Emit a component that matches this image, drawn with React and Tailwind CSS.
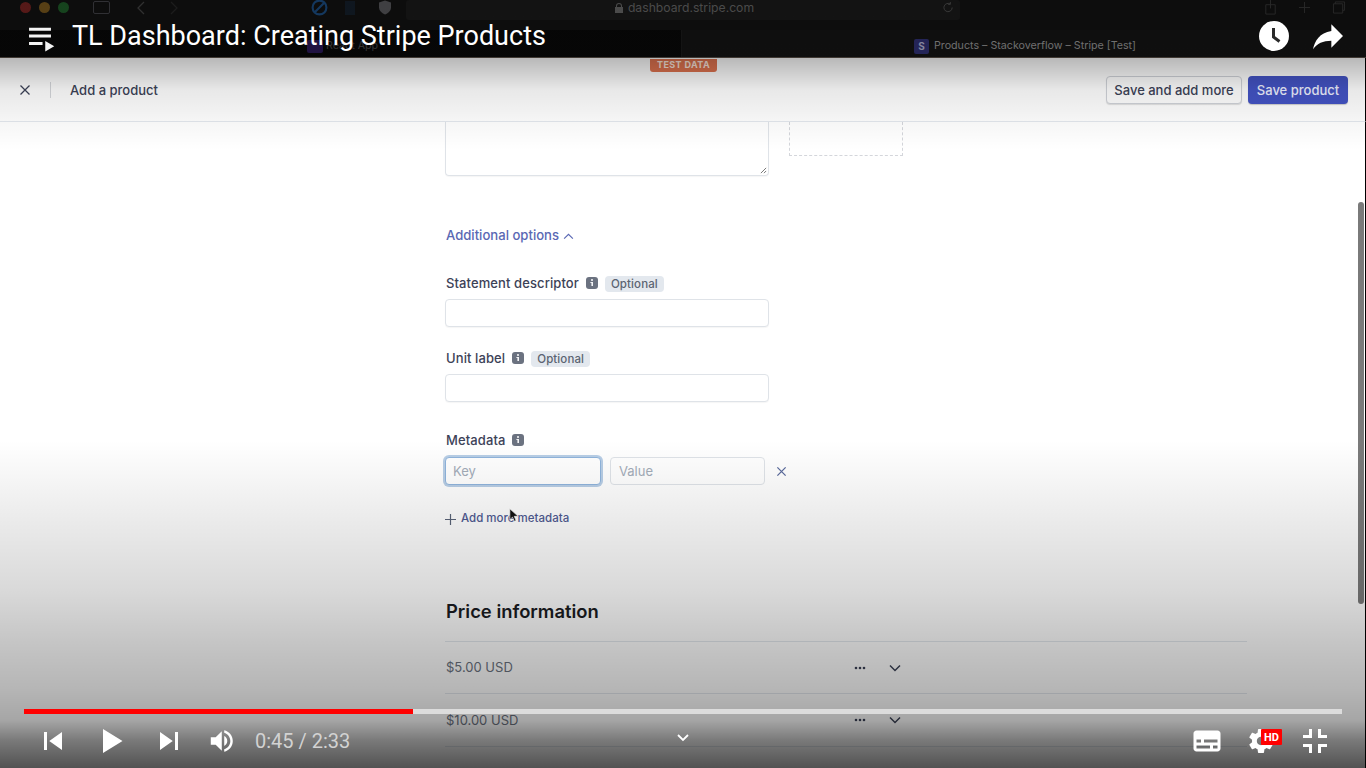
import React from "react";

const Ic = ({ d, className = "", view = "0 0 36 36", fill = "#fff" }) => (
  <svg viewBox={view} className={className} fill={fill}>
    <path d={d} />
  </svg>
);

const Info = () => (
  <span className="flex h-[12px] w-[12px] items-center justify-center rounded-[3px] bg-[#6b7280]">
    <svg viewBox="0 0 12 12" className="h-[12px] w-[12px]" fill="#f3f4f6">
      <rect x="5" y="2.2" width="2" height="1.6" />
      <path d="M4.4 5h2.6v4H5.4V6H4.4z" />
    </svg>
  </span>
);

const Optional = () => (
  <span className="rounded-[4px] bg-[#e3e8ee] px-[6px] py-[1px] text-[11.5px] leading-[15px] font-medium text-[#5b6472]">
    Optional
  </span>
);

const Label = ({ children, optional }) => (
  <div className="flex h-[18px] items-center pl-px text-[13px] font-medium tracking-[0.1px] text-[#3c4257]">
    <span className="mr-[7px] pt-[2px]">{children}</span>
    <Info />
    {optional && <span className="ml-[7px] pt-px"><Optional /></span>}
  </div>
);

const TextBox = () => (
  <div className="h-[28px] w-[324px] rounded-[4px] border border-[#dfe3e8] bg-white shadow-[0_1px_1px_rgba(0,0,0,0.04)]" />
);

const PriceRow = ({ price, tall }) => (
  <div className={`flex items-center border-b border-[#e3e8ee] pr-[346px] text-[13px] text-[#6b7280] ${tall ? "h-[53px]" : "h-[52px]"}`}>
    <span className="flex-1 pl-px pt-px">{price}</span>
    <svg viewBox="0 0 12 4" className="mr-[23px] h-[4px] w-[12px]" fill="#3c4257">
      <circle cx="2" cy="2" r="1.3" /><circle cx="6" cy="2" r="1.3" /><circle cx="10" cy="2" r="1.3" />
    </svg>
    <svg viewBox="0 0 12 8" className="h-[8px] w-[12px]" fill="none" stroke="#3c4257" strokeWidth="1.5">
      <path d="M1 1.500l5 5 5-5" />
    </svg>
  </div>
);

export default function App() {
  return (
    <div className="relative flex h-screen w-full flex-col overflow-hidden bg-white font-['Inter','Liberation_Sans',sans-serif]">
      {/* browser chrome */}
      <div className="flex h-[58px] shrink-0 flex-col border-b border-[#5a5048] bg-[#121212]">
        <div className="relative flex h-[30px] items-center pb-[15px] pl-[20px]">
          <span className="h-[11px] w-[11px] rounded-full bg-[#7a2422]" />
          <span className="ml-[8px] h-[11px] w-[11px] rounded-full bg-[#7c5a1e]" />
          <span className="ml-[8px] h-[11px] w-[11px] rounded-full bg-[#1f5f2a]" />
          <span className="ml-[24px] h-[13px] w-[17px] rounded-[2px] border border-[#44444a]" />
          <svg viewBox="0 0 8 14" className="ml-[27px] h-[14px] w-[8px]" fill="none" stroke="#444" strokeWidth="1.3"><path d="M7 1L1 7l6 6" /></svg>
          <svg viewBox="0 0 8 14" className="ml-[25px] h-[14px] w-[8px]" fill="none" stroke="#282828" strokeWidth="1.3"><path d="M1 1l6 6-6 6" /></svg>
          <svg viewBox="0 0 16 16" className="ml-[133px] h-[17px] w-[17px]" fill="none" stroke="#1c4f86" strokeWidth="2"><circle cx="8" cy="8" r="6.5" /><path d="M3.5 12.5l9-9" /></svg>
          <span className="ml-[17px] h-[14px] w-[10px] bg-[#15202c]" />
          <svg viewBox="0 0 12 14" className="ml-[24px] h-[15px] w-[12px]" fill="#5a5a5e"><path d="M6 0l6 2v5c0 3-2.500 5.500-6 7-3.500-1.500-6-4-6-7V2z" /></svg>
          <div className="absolute left-[406px] top-0 flex h-[20px] w-[554px] items-center justify-center rounded-[3px] bg-[#1b1b1b] pb-[4px] pl-[3px] text-[12.200px] text-[#6a6a6a]">
            <svg viewBox="0 0 8 10" className="mr-[5px] h-[10px] w-[8px]" fill="#6a6a6a"><path d="M1 4V3a3 3 0 016 0v1h1v6H0V4zm1 0h4V3a2 2 0 00-4 0z" /></svg>
            dashboard.stripe.com
            <svg viewBox="0 0 12 12" className="absolute right-[6px] top-[2px] h-[11px] w-[11px]" fill="none" stroke="#555" strokeWidth="1"><path d="M10 6a4.500 4.500 0 11-2-3.700M8 0v2.500H5.500" /></svg>
          </div>
          <svg viewBox="0 0 12 16" className="absolute left-[1264px] top-0 h-[15px] w-[13px]" fill="none" stroke="#3a3a3a" strokeWidth="1"><path d="M1 5h10v10H1zM6 9V0" /></svg>
          <svg viewBox="0 0 12 12" className="absolute left-[1299px] top-[2px] h-[11px] w-[11px]" fill="none" stroke="#3a3a3a" strokeWidth="1"><path d="M6 0v12M0 6h12" /></svg>
          <svg viewBox="0 0 14 14" className="absolute left-[1332px] top-[1px] h-[13px] w-[14px]" fill="none" stroke="#3a3a3a" strokeWidth="1"><path d="M3 3V1h10v9h-2M1 3h10v10H1z" /></svg>
        </div>
        <div className="flex flex-1">
          <div className="flex w-[682px] items-center border-r border-[#1c1c1c] bg-[#090909] pl-[307px] pt-[5px] text-[10.700px] text-[#4a4a4a]">
            <span className="mr-[3px] h-[13px] w-[16px] rounded-[2px] bg-[#2d1a5c]" />
            <span>React App</span>
          </div>
          <div className="flex flex-1 items-center bg-[#151515] pl-[232px] pt-[5px] text-[10.700px] text-[#9b9b9b]">
            <span className="mr-[5px] flex h-[15px] w-[15px] items-center justify-center rounded-[2px] bg-[#32337a] text-[10px] font-bold text-[#b8bbdc]">S</span>
            <span>Products – Stackoverflow – Stripe [Test]</span>
          </div>
        </div>
      </div>

      {/* stripe header */}
      <div className="relative flex h-[64px] shrink-0 items-center border-b border-r border-b-[#e3e8ee] border-r-black bg-white pl-[19px] pr-[17px] pt-px">
        <svg viewBox="0 0 12 12" className="h-[12px] w-[12px]" fill="none" stroke="#3c4257" strokeWidth="1.3"><path d="M1.500 1.500l9 9M10.500 1.500l-9 9" /></svg>
        <span className="ml-[19px] h-[16px] w-px bg-[#d5d7db]" />
        <span className="ml-[19px] flex-1 pt-[2px] text-[13px] font-medium text-[#3c4257]">Add a product</span>
        <button className="h-[28px] w-[136px] rounded-[4px] border border-[#d0d3d9] bg-white pt-px text-[13px] font-medium text-[#3c4257] shadow-[0_1px_1px_rgba(0,0,0,0.12)]">Save and add more</button>
        <button className="ml-[6px] h-[28px] w-[100px] rounded-[4px] bg-[#4353c4] pt-px text-[13px] font-medium text-[#eef0ff] shadow-[0_1px_1px_rgba(0,0,0,0.2)]">Save product</button>
        <span className="absolute left-[650px] top-[1px] rounded-b-[3px] bg-[#e0734f] px-[7px] pb-[1px] text-[9px] leading-[12px] font-bold tracking-[0.4px] text-[#fbe6dc]">TEST DATA</span>
      </div>

      {/* page */}
      <div className="flex min-h-0 flex-1">
        <main className="min-w-0 flex-1 pl-[445px]">
          <div className="flex items-start">
            <div className="relative h-[54px] w-[324px] rounded-b-[4px] border border-t-0 border-[#dfe3e8] shadow-[0_1px_1px_rgba(0,0,0,0.04)]">
              <svg viewBox="0 0 8 8" className="absolute bottom-[1px] right-[1px] h-[7px] w-[7px]" fill="none" stroke="#555" strokeWidth="0.9"><path d="M1 7l6-6M4.500 7L7 4.500" /></svg>
            </div>
            <div className="ml-[20px] h-[34px] w-[114px] border border-t-0 border-dashed border-[#d4d6db]" />
          </div>
          <div className="mt-[50px] flex h-[18px] items-center pl-px pt-[2px] text-[13.100px] font-medium text-[#5a68b4]">
            Additional options
            <svg viewBox="0 0 12 8" className="ml-[4px] h-[7px] w-[11px]" fill="none" stroke="#5a68b4" strokeWidth="1.3"><path d="M1 6.500l5-5 5 5" /></svg>
          </div>
          <div className="mt-[30px]"><Label optional>Statement descriptor</Label></div>
          <div className="mt-[7px]"><TextBox /></div>
          <div className="mt-[22px]"><Label optional>Unit label</Label></div>
          <div className="mt-[7px]"><TextBox /></div>
          <div className="mt-[29px]"><Label>Metadata</Label></div>
          <div className="mt-[8px] flex items-center">
            <div className="flex h-[28px] w-[156px] items-center rounded-[4px] border border-[#8fb4dc] bg-white pl-[7px] pt-px text-[13px] text-[#a3acb9] shadow-[0_0_0_2px_rgba(125,165,210,0.55)]">Key</div>
            <div className="ml-[9px] flex h-[28px] w-[155px] items-center rounded-[4px] border border-[#dfe3e8] bg-white pl-[8px] pt-px text-[13px] text-[#a3acb9]">Value</div>
            <svg viewBox="0 0 12 12" className="ml-[11px] h-[11px] w-[11px]" fill="none" stroke="#5a6a9c" strokeWidth="1.4"><path d="M1.500 1.500l9 9M10.500 1.500l-9 9" /></svg>
          </div>
          <div className="relative mt-[25px] flex h-[18px] items-center text-[11.500px] font-medium text-[#4f5b93]">
            <svg viewBox="0 0 12 12" className="mr-[5px] h-[11px] w-[11px]" fill="none" stroke="#5a6478" strokeWidth="1.3"><path d="M6 0v12M0 6h12" /></svg>
            Add more metadata
            <svg viewBox="0 0 12 18" className="absolute left-[64px] top-[-2px] h-[15px] w-[10px]" fill="#111" stroke="#fff" strokeWidth="0.8"><path d="M1 1v13l3.200-3 2.300 5 2-1-2.200-5H11z" /></svg>
          </div>
          <h2 className="mt-[70px] h-[26px] pl-px text-[18.400px] leading-[26px] font-semibold text-[#1a1c22]">Price information</h2>
          <div className="mt-[17px] w-[802px] border-t border-[#e3e8ee]">
            <PriceRow price="$5.00 USD" />
            <PriceRow price="$10.00 USD" tall />
          </div>
        </main>
        <aside className="w-[10px] shrink-0 border-r border-black pt-[80px]">
          <div className="ml-[2px] h-[402px] w-[6px] rounded-full bg-[#7a7a7a]" />
        </aside>
      </div>

      {/* player gradients */}
      <div className="pointer-events-none absolute inset-x-0 top-0 h-[150px] bg-[linear-gradient(to_bottom,rgba(0,0,0,0.3)_0,rgba(0,0,0,0.28)_58px,rgba(0,0,0,0.09)_90px,rgba(0,0,0,0.04)_120px,rgba(0,0,0,0)_150px)]" />
      <div className="pointer-events-none absolute inset-x-0 bottom-0 h-[328px] bg-[linear-gradient(to_bottom,rgba(0,0,0,0)_0,rgba(0,0,0,0.15)_150px,rgba(0,0,0,0.23)_205px,rgba(0,0,0,0.29)_250px,rgba(0,0,0,0.35)_280px,rgba(0,0,0,0.52)_300px,rgba(0,0,0,0.68)_328px)]" />

      {/* player title */}
      <div className="absolute left-0 top-[9px] flex h-[54px] w-full items-center font-['Roboto',sans-serif] text-white">
        <svg viewBox="0 0 36 36" className="ml-[13px] h-[54px] w-[54px]" fill="#f4f4f4">
          <path d="M10.700 12.500h14.600v2H10.700zM10.700 17h14.600v2H10.700zM10.700 22h9v2h-9zM21.500 21.300l6 3.500-6 3.500z" />
        </svg>
        <span className="ml-[5px] text-[27px]">TL Dashboard: Creating Stripe Products</span>
        <div className="ml-auto flex items-center pr-[18px]">
          <svg viewBox="0 0 30 30" className="h-[30px] w-[30px]">
            <circle cx="15" cy="15" r="15" fill="#fff" />
            <path d="M14.500 7v9l6 4.500" fill="none" stroke="#2a2a2a" strokeWidth="3" />
          </svg>
          <Ic view="0 0 24 24" className="ml-[19px] h-[40px] w-[40px]" d="M14 9V5l7 7-7 7v-4.100c-5 0-8.500 1.600-11 5.100 1-5 4-10 11-11z" />
        </div>
      </div>

      {/* player controls */}
      <div className="absolute inset-x-0 bottom-0 h-[59px] px-[24px]">
        <div className="flex h-[5px] w-full bg-[#dcdcdc]">
          <div className="h-full w-[389px] bg-[#f00]" />
        </div>
        <div className="flex h-[54px] items-center font-['Roboto',sans-serif] text-white">
          <Ic className="ml-[2px] h-[54px] w-[54px]" d="M12 12h2v12h-2zm3.500 6l8.500 6V12z" />
          <Ic className="ml-[5px] h-[54px] w-[54px]" d="M12 26l6.500-4v-8L12 10zM18.500 22l6.500-4-6.500-4z" />
          <Ic className="ml-[3px] h-[54px] w-[54px]" d="M12 24l8.500-6L12 12zM22 12v12h2V12z" />
          <Ic className="ml-[5px] h-[44px] w-[44px]" d="M8 21h4l5 5V10l-5 5H8zM19 14v8c1.480-.68 2.500-2.230 2.500-4 0-1.740-1.020-3.260-2.500-4zM19 11.290c2.890.86 5 3.540 5 6.710s-2.110 5.850-5 6.710v2.060c4.010-.91 7-4.490 7-8.770s-2.990-7.860-7-8.770z" />
          <span className="ml-[10px] text-[20px] text-[#d2d2d2]">0:45 / 2:33</span>
          <svg viewBox="0 0 12 8" className="absolute left-[677px] top-[25px] h-[8px] w-[12px]" fill="none" stroke="#fff" strokeWidth="1.800"><path d="M1 1l5 5 5-5" /></svg>
          <Ic className="ml-auto h-[54px] w-[54px]" d="M11 11c-1.100 0-2 .9-2 2v10c0 1.100.9 2 2 2h14c1.100 0 2-.9 2-2V13c0-1.100-.9-2-2-2zm0 6h3v2h-3zm9 6h-9v-2h9zm5 0h-3v-2h3zm0-4h-9v-2h9z" />
          <div className="relative h-[54px] w-[54px]">
            <Ic className="h-[54px] w-[54px]" d="m23.940 18.780c.03-.25.05-.51.05-.78 0-.27-.02-.52-.05-.78l1.680-1.320c.15-.12.19-.33.09-.51l-1.600-2.760c-.09-.17-.31-.24-.48-.17l-1.990.8c-.41-.32-.86-.58-1.350-.78l-.30-2.120c-.02-.19-.19-.33-.39-.33l-3.200 0c-.2 0-.36.14-.39.33l-.30 2.120c-.48.2-.93.47-1.350.78l-1.990-.8c-.18-.07-.39 0-.48.17l-1.600 2.760c-.1.17-.05.39.09.51l1.680 1.320c-.03.25-.05.52-.05.78 0 .26.02.52.05.78l-1.680 1.320c-.15.12-.19.33-.09.51l1.600 2.760c.09.17.31.24.48.17l1.990-.8c.41.32.86.58 1.350.78l.30 2.120c.02.19.19.33.39.33l3.200 0c.2 0 .36-.14.39-.33l.30-2.120c.48-.2.93-.47 1.350-.78l1.990.8c.18.07.39 0 .48-.17l1.600-2.760c.09-.17.05-.39-.09-.51zm-5.940 2.010c-1.540 0-2.800-1.250-2.800-2.800 0-1.540 1.250-2.800 2.800-2.800 1.540 0 2.800 1.250 2.800 2.800 0 1.540-1.250 2.800-2.800 2.800z" />
            <span className="absolute left-[27px] top-[15px] flex h-[16px] w-[21px] items-center justify-center rounded-[1px] bg-[#f00] text-[11px] leading-none font-bold text-white">HD</span>
          </div>
          <Ic className="h-[54px] w-[54px]" d="M14 14h-4v2h6v-6h-2zM22 14v-4h-2v6h6v-2zM20 26h2v-4h4v-2h-6zM10 22h4v4h2v-6h-6z" />
        </div>
      </div>
    </div>
  );
}
